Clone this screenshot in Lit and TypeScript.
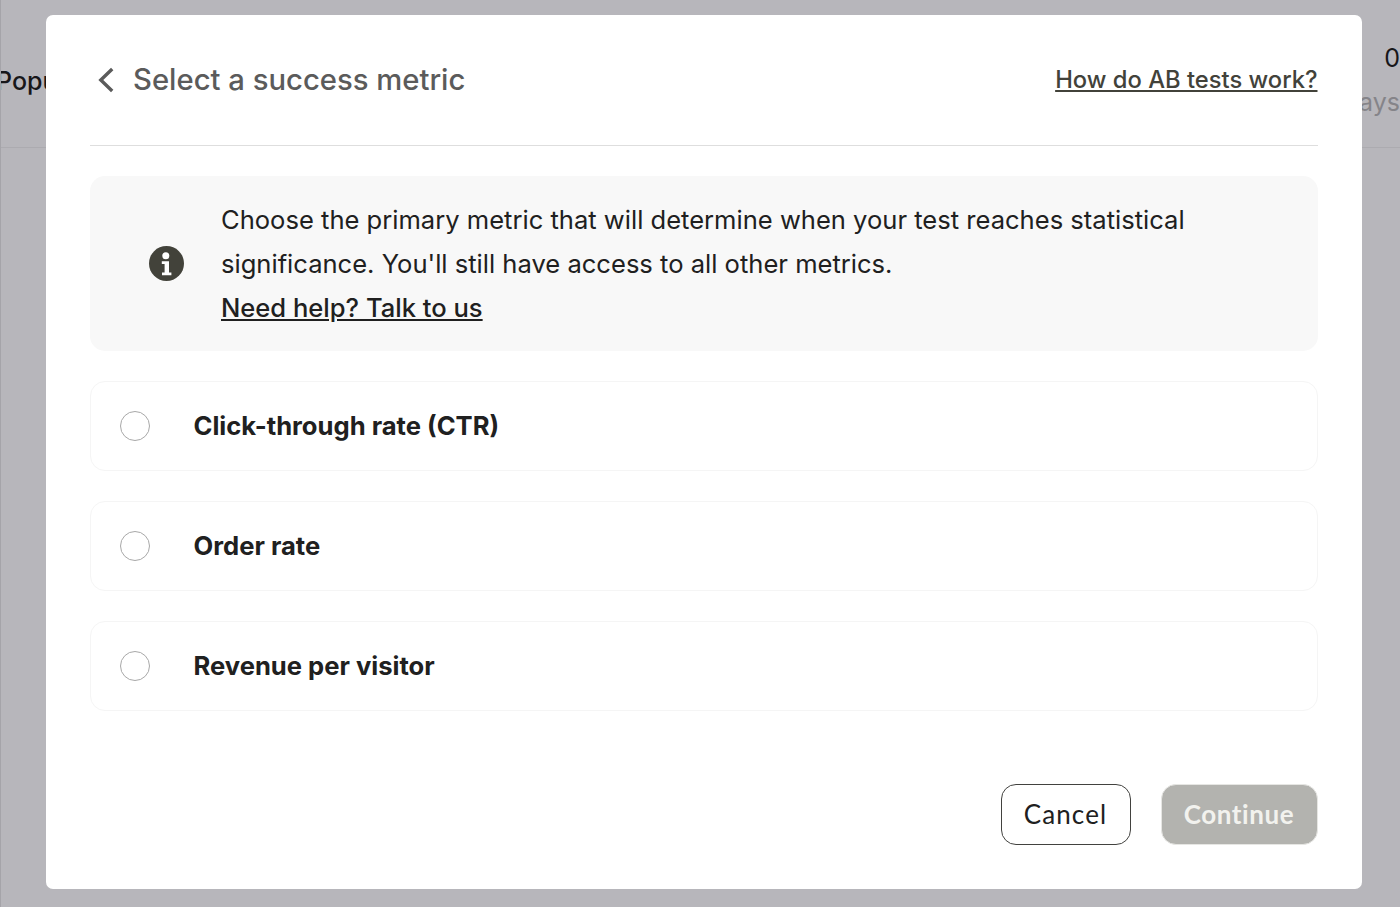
import { LitElement, html, css } from 'lit';
import { customElement, property, state } from 'lit/decorators.js';

/**
 * A single selectable metric card
 */
@customElement('metric-option')
export class MetricOption extends LitElement {
  @property() label = '';
  @property({ type: Boolean, reflect: true }) checked = false;

  static styles = css`
    :host {
      display: flex;
      align-items: center;
      gap: 44px;
      box-sizing: border-box;
      height: 90px;
      padding: 0 29px;
      border: 1.5px solid #f5f5f5;
      border-radius: 15px;
      cursor: pointer;
    }
    .radio {
      box-sizing: border-box;
      width: 30px;
      height: 30px;
      border: 1.5px solid #a8a8a8;
      border-radius: 50%;
    }
    :host([checked]) .radio {
      border: 9px solid #42423a;
    }
    .label {
      font-size: 25.6px;
      font-weight: 700;
      line-height: 32px;
      color: #202020;
    }
  `;

  render() {
    return html`
      <span class="radio"></span>
      <span class="label">${this.label}</span>
    `;
  }
}

@customElement('app-root')
export class AppRoot extends LitElement {
  @state() private selected = '';

  private metrics = ['Click-through rate (CTR)', 'Order rate', 'Revenue per visitor'];

  static styles = css`
    :host {
      display: block;
      position: relative;
      box-sizing: border-box;
      height: 907px;
      overflow: hidden;
      background: #b7b6bb;
      border-left: 1px solid #a5a4a9;
      font-family: Inter, 'Liberation Sans', sans-serif;
    }

    /* page behind the dialog */
    .page-header {
      display: flex;
      justify-content: space-between;
      box-sizing: border-box;
      height: 148px;
      border-bottom: 1px solid #acabb0;
      font-size: 25px;
      color: #17171a;
    }
    .page-title {
      margin: 65px 0 0 -5px;
      font-weight: 500;
      line-height: 32px;
    }
    .page-stats {
      display: flex;
      flex-direction: column;
      align-items: flex-end;
      gap: 12px;
      padding-top: 42px;
      line-height: 32px;
    }
    .days {
      color: #858489;
    }

    .modal {
      position: absolute;
      left: 44.5px;
      top: 15px;
      display: flex;
      flex-direction: column;
      box-sizing: border-box;
      width: 1316px;
      height: 874px;
      padding: 0 44px 44px;
      border-radius: 7px;
      background: #fff;
    }
    .modal-header {
      display: flex;
      align-items: center;
      box-sizing: border-box;
      height: 131px;
      border-bottom: 1.5px solid #dedede;
    }
    .back {
      display: block;
      width: 18px;
      height: 26px;
      margin-left: 7px;
    }
    .title {
      flex: 1;
      margin: 0 0 1px 18.5px;
      font-size: 29.25px;
      font-weight: 500;
      line-height: 36px;
      color: #5b5b5b;
    }
    .how {
      font-size: 23.75px;
      font-weight: 500;
      line-height: 30px;
      color: #42423a;
      text-decoration: underline;
    }

    .info {
      display: flex;
      align-items: center;
      box-sizing: border-box;
      height: 175px;
      margin: 30px 0;
      padding: 0 59px;
      border-radius: 15px;
      background: #f8f8f8;
    }
    .info-icon {
      flex: none;
      width: 35px;
      height: 35px;
      margin-right: 37.5px;
    }
    .info-text {
      padding-top: 1px;
      font-size: 25.57px;
      line-height: 44px;
      color: #202020;
      white-space: nowrap;
    }
    .help {
      font-weight: 500;
      text-decoration: underline;
    }

    .options {
      display: flex;
      flex-direction: column;
      gap: 30px;
    }

    .actions {
      display: flex;
      justify-content: flex-end;
      align-items: center;
      gap: 30px;
      margin-top: auto;
    }
    .btn {
      box-sizing: border-box;
      height: 61px;
      padding: 0 0 1px;
      border-radius: 15px;
      font-family: Lato, 'Open Sans', sans-serif;
      font-size: 26px;
    }
    .cancel {
      width: 130px;
      border: 1.5px solid #42423f;
      background: #fff;
      color: #202020;
      letter-spacing: 1.1px;
    }
    .continue {
      width: 157px;
      border: 1px solid #e6e6e3;
      background: #b3b3af;
      color: #f2f2ee;
      font-weight: 700;
      letter-spacing: 0.6px;
    }
  `;

  render() {
    return html`
      <div class="page-header">
        <div class="page-title">Popu</div>
        <div class="page-stats">
          <span>0</span>
          <span class="days">ays</span>
        </div>
      </div>

      <div class="modal">
        <div class="modal-header">
          <svg class="back" viewBox="0 0 18 26" fill="none">
            <path d="M15.2 2 L3.8 13 L15.2 24" stroke="#5b5b5b" stroke-width="3.4" />
          </svg>
          <h1 class="title">Select a success metric</h1>
          <a class="how">How do AB tests work?</a>
        </div>

        <div class="info">
          <svg class="info-icon" viewBox="0 0 35 35">
            <circle cx="17.5" cy="17.5" r="17.5" fill="#42423a" />
            <circle cx="16.8" cy="9.8" r="3.5" fill="#fff" />
            <path d="M12.8 15.2h7.2v11.2h2.4v2.8h-9.4v-2.8h2.6v-8.4h-2.8z" fill="#fff" />
          </svg>
          <div class="info-text">
            Choose the primary metric that will determine when your test reaches statistical<br />
            significance. You'll still have access to all other metrics.<br />
            <a class="help">Need help? Talk to us</a>
          </div>
        </div>

        <div class="options">
          ${this.metrics.map(
            (m) => html`
              <metric-option
                .label=${m}
                ?checked=${this.selected === m}
                @click=${() => (this.selected = m)}
              ></metric-option>
            `
          )}
        </div>

        <div class="actions">
          <button class="btn cancel">Cancel</button>
          <button class="btn continue" ?disabled=${!this.selected}>Continue</button>
        </div>
      </div>
    `;
  }
}
